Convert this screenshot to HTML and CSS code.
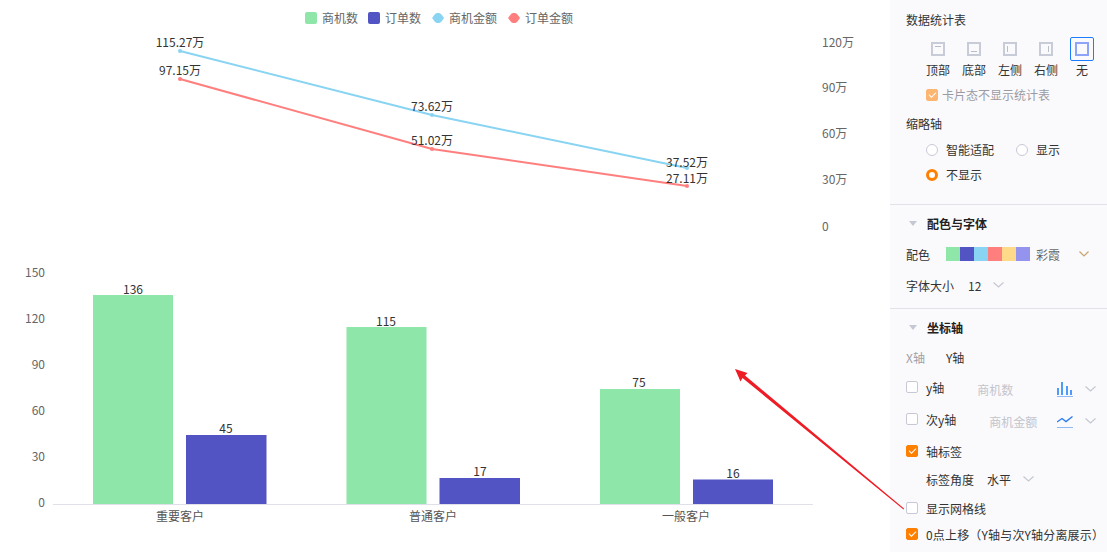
FILE: index.html
```html
<!DOCTYPE html>
<html lang="zh">
<head>
<meta charset="utf-8">
<title>图表配置</title>
<link rel="stylesheet" href="styles.css">
</head>
<body>
<div class="page">
  <main class="chart">
    <div class="legend">
      <span class="leg"><i class="sq green"></i>商机数</span>
      <span class="leg"><i class="sq indigo"></i>订单数</span>
      <span class="leg"><i class="dot sky"></i>商机金额</span>
      <span class="leg"><i class="dot coral"></i>订单金额</span>
    </div>
    <svg class="plot" width="890" height="552" viewBox="0 0 890 552">
      <g class="axis-text" text-anchor="start">
        <text x="822" y="47">120万</text>
        <text x="822" y="92">90万</text>
        <text x="822" y="138">60万</text>
        <text x="822" y="184">30万</text>
        <text x="822" y="231">0</text>
      </g>
      <polyline class="ln sky-s" points="180,51 432,115 687,168"/>
      <polyline class="ln coral-s" points="180,79 432,149 687,186"/>
      <g class="pt-sky"><circle cx="180" cy="51" r="2"/><circle cx="432" cy="115" r="2"/><circle cx="687" cy="168" r="2"/></g>
      <g class="pt-coral"><circle cx="180" cy="79" r="2"/><circle cx="432" cy="149" r="2"/><circle cx="687" cy="186" r="2"/></g>
      <g class="val" text-anchor="middle">
        <text x="180" y="47">115.27万</text>
        <text x="180" y="75">97.15万</text>
        <text x="432" y="111">73.62万</text>
        <text x="432" y="145">51.02万</text>
        <text x="687" y="167">37.52万</text>
        <text x="687" y="183">27.11万</text>
      </g>
      <g class="axis-text" text-anchor="end">
        <text x="45" y="277">150</text>
        <text x="45" y="323">120</text>
        <text x="45" y="369">90</text>
        <text x="45" y="415">60</text>
        <text x="45" y="461">30</text>
        <text x="45" y="507">0</text>
      </g>
      <rect class="bar-g" x="93" y="295" width="80" height="209"/>
      <rect class="bar-i" x="186" y="435" width="80.500" height="69"/>
      <rect class="bar-g" x="346.500" y="327" width="80" height="177"/>
      <rect class="bar-i" x="439.500" y="478" width="80.500" height="26"/>
      <rect class="bar-g" x="600" y="389" width="80" height="115"/>
      <rect class="bar-i" x="693" y="479.500" width="80" height="24.500"/>
      <line class="base" x1="53" y1="504.500" x2="813" y2="504.500"/>
      <g class="val" text-anchor="middle">
        <text x="133" y="294">136</text>
        <text x="226" y="433">45</text>
        <text x="386" y="326">115</text>
        <text x="480" y="476">17</text>
        <text x="639" y="387">75</text>
        <text x="733" y="478">16</text>
      </g>
      <g class="cat" text-anchor="middle">
        <text x="180" y="521">重要客户</text>
        <text x="433" y="521">普通客户</text>
        <text x="686" y="521">一般客户</text>
      </g>
    </svg>
  </main>

  <aside class="panel">
    <section class="sec first">
      <div class="row title-row">数据统计表</div>
      <div class="pos">
        <div class="pos-item"><span class="pos-box"><svg width="14" height="14" viewBox="0 0 14 14"><rect class="ico" x="1" y="1" width="12" height="12"/><line class="ico-in" x1="4" y1="4.500" x2="10" y2="4.500"/></svg></span>顶部</div>
        <div class="pos-item"><span class="pos-box"><svg width="14" height="14" viewBox="0 0 14 14"><rect class="ico" x="1" y="1" width="12" height="12"/><line class="ico-in" x1="4" y1="9.500" x2="10" y2="9.500"/></svg></span>底部</div>
        <div class="pos-item"><span class="pos-box"><svg width="14" height="14" viewBox="0 0 14 14"><rect class="ico" x="1" y="1" width="12" height="12"/><line class="ico-in" x1="4.500" y1="4" x2="4.500" y2="10"/></svg></span>左侧</div>
        <div class="pos-item"><span class="pos-box"><svg width="14" height="14" viewBox="0 0 14 14"><rect class="ico" x="1" y="1" width="12" height="12"/><line class="ico-in" x1="9.500" y1="4" x2="9.500" y2="10"/></svg></span>右侧</div>
        <div class="pos-item"><span class="pos-box sel"><svg width="14" height="14" viewBox="0 0 14 14"><rect class="ico-sel" x="1" y="1" width="12" height="12"/></svg></span>无</div>
      </div>
      <label class="row check-row indent dim"><i class="cb on faded"></i>卡片态不显示统计表</label>
      <div class="row title-row thumb">缩略轴</div>
      <div class="row radios r1"><span class="radio-l w90"><i class="rd"></i>智能适配</span><span class="radio-l"><i class="rd"></i>显示</span></div>
      <div class="row radios r2"><span class="radio-l"><i class="rd sel-rd"></i>不显示</span></div>
    </section>

    <section class="sec color">
      <div class="row head"><i class="tri"></i>配色与字体</div>
      <div class="row palette-row">
        <span class="lab40">配色</span>
        <span class="swatches"><i class="green"></i><i class="indigo"></i><i class="sky"></i><i class="coral"></i><i class="sand"></i><i class="violet"></i></span>
        <span class="pal-name">彩霞</span>
        <svg class="chev amber" width="10" height="6" viewBox="0 0 10 6"><path d="M.5.5 5 5 9.500.5"/></svg>
      </div>
      <div class="row font-row">
        <span>字体大小</span><span class="fs">12</span>
        <svg class="chev lg" width="11" height="6" viewBox="0 0 11 6"><path d="M.5.5 5.500 5 10.500.5"/></svg>
      </div>
    </section>

    <section class="sec axes">
      <div class="row head"><i class="tri"></i>坐标轴</div>
      <div class="row tabs"><span class="tab-off">X轴</span><span>Y轴</span></div>
      <div class="row ax-row yrow">
        <i class="cb"></i><span class="ax-name">y轴</span><span class="ax-field f1">商机数</span>
        <svg class="type-ico" width="16" height="16" viewBox="0 0 16 16"><path d="M0 15.500h16" class="blue-l"/><rect x="0" y="7" width="2" height="7" class="blue-f"/><rect x="4" y="1" width="2" height="13" class="blue-f"/><rect x="9" y="5" width="2" height="9" class="blue-f"/><rect x="13" y="9" width="2" height="5" class="blue-f"/></svg>
        <svg class="chev lg" width="11" height="6" viewBox="0 0 11 6"><path d="M.5.5 5.500 5 10.500.5"/></svg>
      </div>
      <div class="row ax-row srow">
        <i class="cb"></i><span class="ax-name">次y轴</span><span class="ax-field f2">商机金额</span>
        <svg class="type-ico" width="16" height="16" viewBox="0 0 16 16"><path d="M0 14.500h16" class="blue-l"/><path d="M0 9l5-3.500 4 3L15.500 3.500" class="blue-d"/></svg>
        <svg class="chev lg" width="11" height="6" viewBox="0 0 11 6"><path d="M.5.5 5.500 5 10.500.5"/></svg>
      </div>
      <label class="row check-row label-row"><i class="cb on"></i>轴标签</label>
      <div class="row angle-row"><span>标签角度</span><span class="ang">水平</span>
        <svg class="chev lg" width="11" height="6" viewBox="0 0 11 6"><path d="M.5.5 5.500 5 10.500.5"/></svg>
      </div>
      <label class="row check-row grid-row"><i class="cb"></i>显示网格线</label>
      <label class="row check-row zero-row"><i class="cb on"></i><span class="zero-t">0点上移（Y轴与次Y轴分离展示）</span></label>
    </section>
  </aside>

  <svg class="arrow" width="1107" height="552" viewBox="0 0 1107 552"><path d="M735 369 L747.500 373 L745 375.500 L904 508.500 L903.500 509.500 L742.500 378 L740.500 381.500 Z"/></svg>
</div>
</body>
</html>
```
FILE: styles.css
```css
* { box-sizing: border-box; }
html, body { margin: 0; padding: 0; }
body {
  font-family: "Noto Sans CJK SC", "Noto Sans", sans-serif;
  font-size: 12px;
  color: #333;
  background: #fff;
  overflow: hidden;
}
i { display: block; font-style: normal; flex: none; }
.page { position: relative; display: flex; width: 1107px; height: 552px; overflow: hidden; }
.chart { position: relative; width: 890px; height: 552px; flex: none; }
.plot { display: block; }
.legend {
  position: absolute; left: 305px; top: 9px; display: flex; gap: 10px; line-height: 18px; color: #666;
}
.leg { display: flex; align-items: center; gap: 5px; }
.sq { width: 12px; height: 12px; border-radius: 2px; }
.dot {
  width: 12px; height: 10px; margin-left: 1px;
  clip-path: polygon(0 50%, 25% 10%, 40% 0, 60% 0, 75% 10%, 100% 50%, 75% 90%, 60% 100%, 40% 100%, 25% 90%);
}
.green { background: #8ee6a8; }
.indigo { background: #5254c4; }
.sky { background: #88d4f2; }
.coral { background: #ff7f7f; }
.sand { background: #ffd98a; }
.violet { background: #9494ee; }

text { font-family: "Noto Sans CJK SC", "Noto Sans", sans-serif; font-size: 12px; }
.axis-text text { fill: #666; }
.val text { fill: #333; }
.cat text { fill: #555; }
.ln { fill: none; stroke-width: 2; }
.sky-s { stroke: #88d4f2; }
.coral-s { stroke: #ff7f7f; }
.pt-sky { fill: #88d4f2; }
.pt-coral { fill: #ff7f7f; }
.bar-g { fill: #8ee6a8; }
.bar-i { fill: #5254c4; }
.base { stroke: #dfe0ea; stroke-width: 1; }

.panel { width: 217px; height: 552px; flex: none; background: #fafafc; overflow: hidden; }
.sec { display: flow-root; padding: 0 0 0 16px; border-bottom: 1px solid #e2e2ea; }
.sec.first { height: 205px; }
.sec.color { height: 104px; }
.sec.axes { border-bottom: 0; }
.row { display: flex; align-items: center; height: 20px; white-space: nowrap; }
.title-row { margin-top: 9px; }
.pos { display: flex; margin: 8px 0 0 14px; }
.pos-item { width: 36px; display: flex; flex-direction: column; align-items: center; line-height: 18px; }
.pos-box { width: 24px; height: 24px; display: flex; align-items: center; justify-content: center; border: 1px solid transparent; border-radius: 2px; }
.pos-box.sel { border-color: #1a7cff; }
.ico { fill: none; stroke: #c8ccd8; stroke-width: 2; }
.ico-in { stroke: #b9bdca; stroke-width: 1; }
.ico-sel { fill: none; stroke: #8ea4f8; stroke-width: 2; }
.indent { margin-left: 20px; }
.check-row { gap: 4px; }
.dim { color: #9a9aa5; margin-top: 5px; }
.dim .cb { margin-top: 2px; }
.cb { width: 12px; height: 12px; border: 1px solid #c9c9d6; border-radius: 2px; background: #fff; position: relative; }
.cb.on { background: #ff8000; border-color: #ff8000; }
.cb.on::after {
  content: ""; position: absolute; left: 2px; top: 2px; width: 6px; height: 3px;
  border-left: 1.300px solid #fff; border-bottom: 1.300px solid #fff; transform: rotate(-45deg);
}
.cb.faded { opacity: .55; }
.thumb { margin-top: 9px; }
.radios { padding-left: 20px; }
.r1 { margin-top: 6px; }
.r2 { margin-top: 5px; }
.radio-l { display: flex; align-items: center; gap: 8px; }
.w90 { width: 90px; }
.rd { width: 12px; height: 12px; margin-top: 2px; border: 1px solid #c9c9d6; border-radius: 50%; background: #fff; }
.sel-rd { border: 3px solid #ff8000; }

.head { font-weight: 700; color: #222; margin-top: 8px; }
.tri { width: 0; height: 0; border: 4px solid transparent; border-top: 5px solid #c5c8d2; border-bottom: 0; margin: 0 10px 0 3px; }
.palette-row { margin-top: 11px; }
.lab40 { width: 40px; }
.swatches { display: flex; }
.swatches i { width: 14px; height: 14px; }
.pal-name { margin-left: 6px; color: #666; width: 43px; }
.chev { flex: none; fill: none; stroke: #c5c8d2; stroke-width: 1.200; }
.chev.amber { stroke: #c9a46e; }
.font-row { margin-top: 11px; }
.fs { margin-left: 14px; width: 25px; }
.tabs { margin-top: 10px; gap: 21px; }
.tab-off { color: #a0a0a8; }
.ax-row { position: relative; }
.yrow { margin-top: 10px; }
.srow { margin-top: 12px; }
.ax-name { margin-left: 8px; }
.ax-field { color: #c4c4cc; margin-top: 4px; }
.f1 { margin-left: 33px; width: 80px; }
.f2 { margin-left: 33px; width: 68px; }
.type-ico { flex: none; margin: 4px 12px 0 0; fill: none; }
.blue-l { stroke: #8ebbf8; stroke-width: 1; }
.blue-d { stroke: #2b7cf0; stroke-width: 1.400; fill: none; }
.blue-f { fill: #4f9bfa; }
.yrow .chev, .srow .chev { margin-top: 4px; }
.label-row, .grid-row, .zero-row { gap: 8px; }
.label-row { margin-top: 12px; }
.angle-row { margin: 8px 0 0 20px; }
.ang { margin-left: 13px; width: 36px; }
.grid-row { margin-top: 9px; }
.zero-row { margin-top: 6px; }
.zero-t { letter-spacing: 0.170px; }
.arrow { position: absolute; left: 0; top: 0; pointer-events: none; }
.arrow path { fill: #ee1c25; }
```
